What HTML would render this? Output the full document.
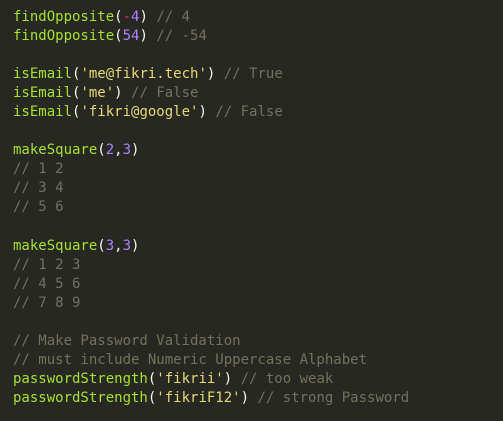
<!DOCTYPE html>
<html><head><style>
html,body{margin:0;padding:0;background:#272822;width:503px;height:421px;overflow:hidden}
pre{margin:0;padding:8px 0 0 13px;font-family:"DejaVu Sans Mono","Liberation Mono",monospace;font-size:14px;line-height:19.05px;color:#f8f8f2}
.f{color:#a6e22e}.s{color:#e6db74}.n{color:#ae81ff}.o{color:#f92672}.c{color:#75715e}
</style></head><body><pre><span class="f">findOpposite</span>(<span class="o">-</span><span class="n">4</span>) <span class="c">// 4</span>
<span class="f">findOpposite</span>(<span class="n">54</span>) <span class="c">// -54</span>

<span class="f">isEmail</span>(<span class="s">'me@fikri.tech'</span>) <span class="c">// True</span>
<span class="f">isEmail</span>(<span class="s">'me'</span>) <span class="c">// False</span>
<span class="f">isEmail</span>(<span class="s">'fikri@google'</span>) <span class="c">// False</span>

<span class="f">makeSquare</span>(<span class="n">2</span>,<span class="n">3</span>)
<span class="c">// 1 2</span>
<span class="c">// 3 4</span>
<span class="c">// 5 6</span>

<span class="f">makeSquare</span>(<span class="n">3</span>,<span class="n">3</span>)
<span class="c">// 1 2 3</span>
<span class="c">// 4 5 6</span>
<span class="c">// 7 8 9</span>

<span class="c">// Make Password Validation</span>
<span class="c">// must include Numeric Uppercase Alphabet</span>
<span class="f">passwordStrength</span>(<span class="s">'fikrii'</span>) <span class="c">// too weak</span>
<span class="f">passwordStrength</span>(<span class="s">'fikriF12'</span>) <span class="c">// strong Password</span></pre></body></html>
